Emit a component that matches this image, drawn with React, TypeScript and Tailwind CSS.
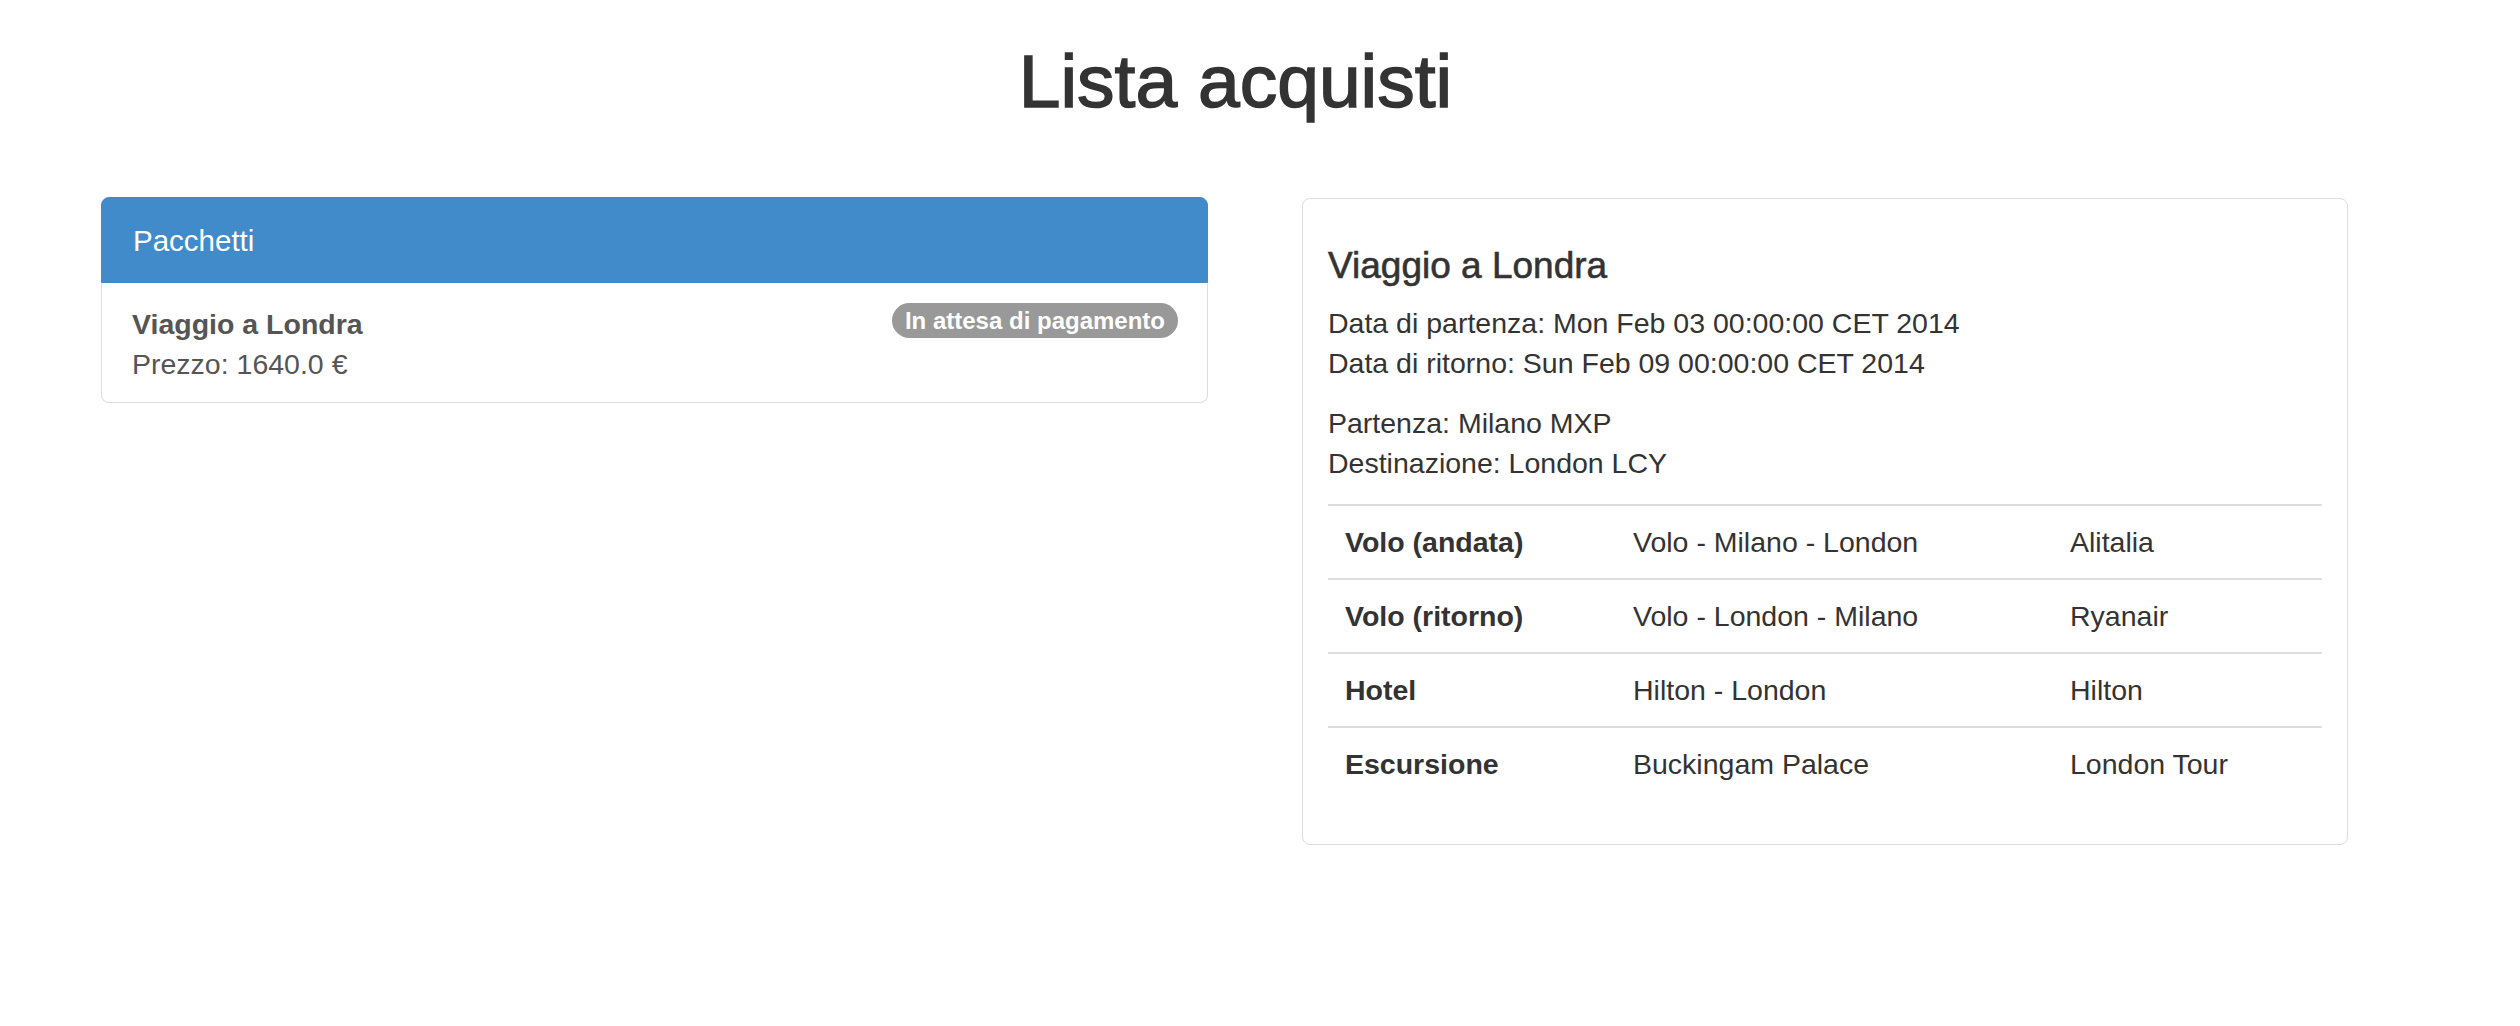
const righe = [
    { tipo: "Volo (andata)", nome: "Volo - Milano - London", fornitore: "Alitalia" },
    { tipo: "Volo (ritorno)", nome: "Volo - London - Milano", fornitore: "Ryanair" },
    { tipo: "Hotel", nome: "Hilton - London", fornitore: "Hilton" },
    { tipo: "Escursione", nome: "Buckingam Palace", fornitore: "London Tour" },
];

const App = () => {
    return (
        <div className="w-[2471px] bg-white text-[#333] font-['Liberation_Sans',Arial,sans-serif]">
            <h1 className="pt-[41px] text-center text-[75px] leading-[80px] font-normal [-webkit-text-stroke:1.5px_#333]">
                Lista acquisti
            </h1>

            <div className="flex items-start gap-[94px] pl-[101px] mt-[76px]">
                {/* pacchetti */}
                <div className="w-[1107px]">
                    <div className="rounded-t-[8px] bg-[#428bca] border border-[#428bca] pl-[31px] pt-[23px] pb-[21px] text-[29.5px] leading-[40px] text-white">
                        Pacchetti
                    </div>
                    <div className="flex items-start justify-between rounded-b-[8px] border border-t-0 border-[#ddd] pl-[30px] pr-[29px] pt-[21px] pb-[18px] text-[28.5px] leading-[40px] text-[#555]">
                        <div>
                            <div className="font-bold">Viaggio a Londra</div>
                            <div>Prezzo: 1640.0 €</div>
                        </div>
                        <span className="-mt-[1px] rounded-full bg-[#999] px-[13px] text-[24px] leading-[35px] font-bold text-white">
                            In attesa di pagamento
                        </span>
                    </div>
                </div>

                {/* dettaglio */}
                <div className="mt-[1px] w-[1046px] rounded-[8px] border border-[#ddd] px-[25px] pt-[47px] pb-[44px]">
                    <h4 className="text-[37px] leading-[40px] font-normal [-webkit-text-stroke:0.6px_#333]">Viaggio a Londra</h4>
                    <div className="mt-[17px] text-[28.5px] leading-[40px]">
                        <p>Data di partenza: Mon Feb 03 00:00:00 CET 2014</p>
                        <p>Data di ritorno: Sun Feb 09 00:00:00 CET 2014</p>
                    </div>
                    <div className="mt-[20px] text-[28.5px] leading-[40px]">
                        <p>Partenza: Milano MXP</p>
                        <p>Destinazione: London LCY</p>
                    </div>
                    <table className="mt-[21px] w-full table-fixed border-collapse text-[28.5px] leading-[37px]">
                        <colgroup>
                            <col className="w-[288px]" />
                            <col className="w-[437px]" />
                            <col />
                        </colgroup>
                        <tbody>
                            {righe.map((r) => (
                                <tr key={r.tipo} className="border-t-2 border-[#ddd]">
                                    <td className="px-[17px] pt-[18px] pb-[17px] font-bold">{r.tipo}</td>
                                    <td className="px-[17px] pt-[18px] pb-[17px]">{r.nome}</td>
                                    <td className="px-[17px] pt-[18px] pb-[17px]">{r.fornitore}</td>
                                </tr>
                            ))}
                        </tbody>
                    </table>
                </div>
            </div>
        </div>
    );
};

export default App;
